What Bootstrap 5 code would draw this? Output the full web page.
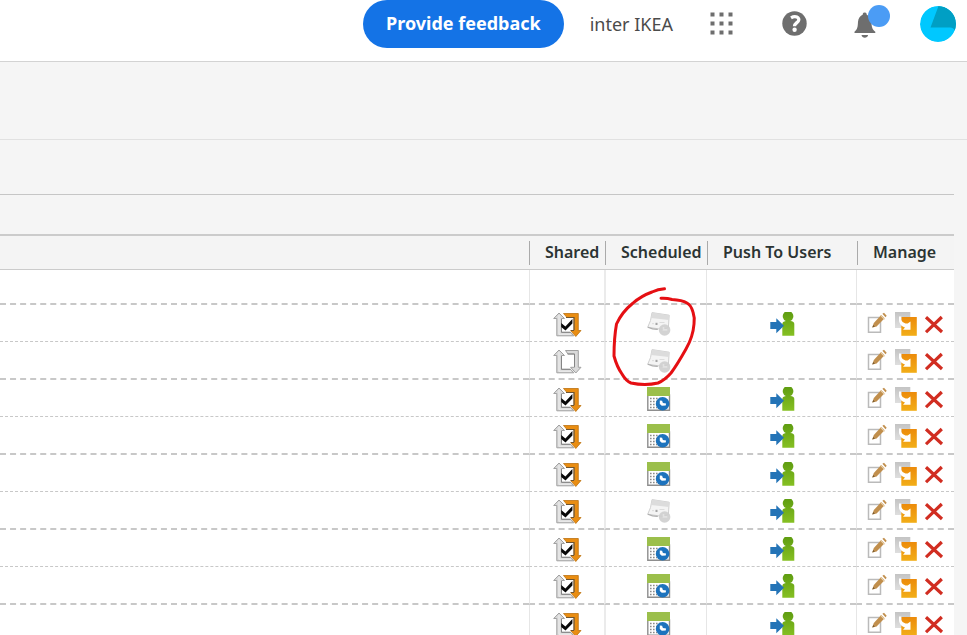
<!DOCTYPE html>
<html lang="en">
<head>
<meta charset="utf-8">
<meta name="viewport" content="width=device-width, initial-scale=1">
<title>Report manager</title>
<link href="https://cdn.jsdelivr.net/npm/bootstrap@5.3.0/dist/css/bootstrap.min.css" rel="stylesheet">
<style>
body{font-family:"Noto Sans","Open Sans",sans-serif;background:#f5f5f5;color:#2c3433}
.shell-bar{height:62px;border-bottom:1px solid #d3d3d3;padding:0 11px 14px 0}
.feedback{height:48px;padding:0 23px 2px;background:#1473e6;border:0;font-size:18px;line-height:24px}
.org-name{font-size:18px;line-height:24px;color:#4b4b4b;margin:0 37px 0 26px}
.tool{line-height:0}
.tool-apps{margin-right:48px}
.tool-help{margin-right:47px}
.tool-bell{margin-right:42px}
.dot{width:22px;height:22px;background:#4b9cf5;top:-5px;left:14px}
.title-band{height:78px;border-bottom:1px solid #e1e1e1}
.content{margin-right:13px}
.filter-band{height:55px;border-bottom:1px solid #c6c6c6}
.space-band{height:39px}
.reports{table-layout:fixed;border-collapse:separate;border-spacing:0;background:#fff}
.c-shared{width:75px}.c-sched{width:102px}.c-push{width:150px}.c-manage{width:98px}
.reports th{height:36px;padding:0 0 0 1px;border-top:2px solid #cbcbcb;border-bottom:1px solid #cbcbcb;background:#f4f4f4;font-size:16px;font-weight:600;white-space:nowrap;vertical-align:middle}
.reports th:nth-child(2){padding-left:0}
.reports th span{display:block;height:24px;line-height:22px;border-left:1px solid #aaa;padding-left:15px}
.reports td{height:37px;padding:7px 0 0;vertical-align:top;line-height:0;border-bottom:1px dashed #c8c8c8}
.reports tr:nth-child(odd) td{height:38px;border-bottom:2px dashed #c8c8c8}
.reports tr.blank-row td{height:35px}
.reports td:nth-child(n+2){border-left:1px solid #e6e6e6}
.reports td:nth-child(3){border-left:2px solid #ebebeb}
.reports td:nth-child(2){padding-left:23px}
.reports td:nth-child(3){padding-left:41px}
.reports td:nth-child(4){padding-left:63px}
.reports td:nth-child(5){padding-left:10px}
.acts{gap:8px}
.ico{width:24px;height:26px}
.ico-share{width:30px}.ico-push{width:26px}.ico-edit{width:20px}.ico-copy{width:22px}.ico-del{width:20px}
.marker{top:286px;left:610px;pointer-events:none}
</style>
<script src="https://cdn.jsdelivr.net/npm/bootstrap@5.3.0/dist/js/bootstrap.bundle.min.js"></script>
</head>
<body>
<svg width="0" height="0" class="position-absolute" aria-hidden="true">
<defs>
<linearGradient id="gOr" x2="0" y2="1"><stop stop-color="#ec8b0b"/><stop offset="1" stop-color="#f2ae18"/></linearGradient>
<linearGradient id="gGn" x2="0" y2="1"><stop stop-color="#5d9b10"/><stop offset="1" stop-color="#86c023"/></linearGradient>
<linearGradient id="gGy" x2="0" y2="1"><stop stop-color="#c4c4c4"/><stop offset="1" stop-color="#dedede"/></linearGradient>
</defs>
<symbol id="share-left" viewBox="0 0 30 26">
<path d="M6 1 .7 6.5h3.1v17.3h17l-3-3.3H8.5v-14h3z" fill="#d9d9d9" stroke="#a0a0a0"/>
<path d="M6 3v19.2h12" fill="none" stroke="#efefef"/>
<path d="M8.5 7v13.2h9" fill="none" stroke="#858585"/>
</symbol>
<symbol id="share-on" viewBox="0 0 30 26">
<use href="#share-left" width="30" height="26"/>
<path d="M10.5 1.5h14.8v17H28L22.8 24.5 17.6 18.5h3.6V5.5H14z" fill="#e98d12" stroke="#bc7210" stroke-width=".8"/>
<path d="M13 5.5h8v12.5M18 18.5h3" fill="none" stroke="#6d5431" stroke-width="1.2"/>
<path d="m8.2 11 4.2 3.6 7-7.6v4.4L12.5 18.6 8.2 15z" fill="#080808"/>
</symbol>
<symbol id="share-off" viewBox="0 0 30 26">
<use href="#share-left" width="30" height="26"/>
<path d="M12.5 1.5h12.8v16.8H28L22.8 24l-5.2-5.7h3.9V5H15z" fill="#dadada" stroke="#a0a0a0"/>
<path d="M14.5 5h7v13" fill="none" stroke="#858585"/>
</symbol>
<symbol id="sched-on" viewBox="0 0 24 26">
<path d="M.8 8h21.7v15.3H.8z" fill="#fff" stroke="#8e8e8e" stroke-width="1.4"/>
<path d="M0 0h23v9H0z" fill="#9bbf4b"/>
<path d="M3 11.5h13M3 14.5h9M3 17.5h7M3 20.5h7" stroke="#8b8b8b" stroke-width="1.3" stroke-dasharray="1.6 1.4"/>
<circle cx="15.6" cy="16.8" r="6.8" fill="#1d73bd"/>
<path d="M12.8 13.5l2.3.3.8 2.2 3.2.6-.4 2-3.9.2-2-1.9z" fill="#fff"/>
</symbol>
<symbol id="sched-off" viewBox="0 0 24 26">
<path d="m5 .6 17.2 2.6-.8 12.3-5.4 2L.7 15.2q3.5-6 4.3-14.6" fill="#f4f4f4" stroke="#cfcfcf"/>
<path d="m5 .6 17.2 2.6-.3 4.8L4 6z" fill="#dcdcdc"/>
<path d="M.8 15.2q5.2 2.4 10 2.2" stroke="#b0b0b0" stroke-width="1.2" fill="none"/>
<path d="M8.5 10.8h2v2.2h-2z" fill="#a5a5a5"/>
<path d="M12.5 10.5h5M5 11.7h2" stroke="#dcdcdc"/>
<circle cx="17.6" cy="18" r="5.8" fill="#cecece" fill-opacity=".9"/>
<path d="M16.5 15v2.9h3.8" fill="none" stroke="#e2e2e2" stroke-width="1.6"/>
</symbol>
<symbol id="push" viewBox="0 0 26 26">
<path d="M12.3 23.8V12q0-2.5 3.5-3a5.3 5.3 0 1 1 4.5 0Q24.3 9.3 24.3 12v11.8z" fill="url(#gGn)"/>
<path d="M.3 10h6V6.2l7.7 7.6-7.7 7.5V17h-6z" fill="#2474b7"/>
</symbol>
<symbol id="edit" viewBox="0 0 20 26">
<path d="M1.5 5.5h12v14.7h-12z" fill="#fff" stroke="#bababa" stroke-width="1.5"/>
<path d="m5.3 15.6 1.5-4.5 7.4-8 3.4 3.2-8 8.1z" fill="#c18f4d"/><path d="m5.3 15.6.9-2.7 1.7 1.5z" fill="#785a30"/>
<path d="m13.6 3.4 4 4" stroke="#ead3af" stroke-width="1.1"/>
<path d="m15.4 1.8 1.6-1 2.7 3-1.2 1.4z" fill="#c18f4d"/>
</symbol>
<symbol id="copy" viewBox="0 0 22 26">
<path d="M0 0h15.3v16H0z" fill="url(#gGy)"/>
<path d="M6.3 5h15.5v18.8H6.3z" fill="url(#gOr)"/>
<path d="M4 4.5h2.3V8q1 3 4.2 3.6h2.2l2.8-2.1v8.3H8l2-2.3Q5 14 4 9z" fill="#fff"/>
</symbol>
<symbol id="del" viewBox="0 0 20 26">
<path d="M1 5.2 17 20M16.8 5 1 20.2" fill="none" stroke="#d12d21" stroke-width="3.2"/>
</symbol>
</svg>

<div class="position-relative vh-100 overflow-hidden">
<header class="shell-bar bg-white d-flex align-items-center justify-content-end">
<button type="button" class="feedback btn btn-primary rounded-pill fw-bold">Provide feedback</button>
<span class="org-name">inter IKEA</span>
<button type="button" class="tool tool-apps btn p-0 border-0 rounded-0" aria-label="Apps"><svg width="24" height="24" fill="#6e6e6e"><path d="M.5.5h4v4h-4zM9.5.5h4v4h-4zM18.5.5h4v4h-4zM.5 9.5h4v4h-4zM9.5 9.5h4v4h-4zM18.5 9.5h4v4h-4zM.5 18.5h4v4h-4zM9.5 18.5h4v4h-4zM18.5 18.5h4v4h-4z"/></svg></button>
<button type="button" class="tool tool-help btn p-0 border-0 rounded-0" aria-label="Help"><svg width="25" height="25"><circle cx="12.5" cy="12.5" r="12.2" fill="#6e6e6e"/><path d="M9 6.8q3.4-2 6-.7c2.8 1.5 2 4-.1 5.5-1.6 1.3-2.4 1.8-2.4 3.7" fill="none" stroke="#fff" stroke-width="3.3"/><circle cx="12.6" cy="18.8" r="2.2" fill="#fff"/></svg></button>
<button type="button" class="tool tool-bell btn p-0 border-0 rounded-0 position-relative" aria-label="Notifications"><svg width="24" height="28" viewBox="0 0 24 28" fill="#6e6e6e"><path d="M.5 23v-1.2c3.2-3 3.2-4.8 3.5-10C4.3 8 6.3 5.5 8.7 4.7V4a2.1 2.1 0 0 1 4 0v.7c2.6.8 4.4 3.2 4.7 7.1.3 5.2.5 7 3.9 10V23zM7.5 25h6.6c-.5 3.6-6.1 3.6-6.6 0"/></svg><span class="dot position-absolute rounded-circle"></span></button>
<button type="button" class="tool btn p-0 border-0 rounded-circle overflow-hidden" aria-label="Account"><svg width="36" height="36"><circle cx="18" cy="18" r="18" fill="#00c8ff"/><path d="M18.5 0a18 18 0 0 1 16.5 25q-1-3.5-5-3.5H10.5z" fill="#009fc4"/></svg></button>
</header>
<div class="title-band"></div>
<main class="content">
<div class="filter-band"></div>
<div class="space-band"></div>
<table class="reports w-100">
<colgroup><col><col class="c-shared"><col class="c-sched"><col class="c-push"><col class="c-manage"></colgroup>
<thead><tr><th></th><th scope="col"><span>Shared</span></th><th scope="col"><span>Scheduled</span></th><th scope="col"><span>Push To Users</span></th><th scope="col"><span>Manage</span></th></tr></thead>
<tbody id="rows"></tbody>
</table>
</main>
<svg class="marker position-absolute" width="90" height="104" viewBox="0 0 90 104" fill="none" stroke="#e50f13" stroke-width="3" stroke-linecap="round" stroke-linejoin="round"><path d="M54.5 2.7Q48 3 42 6 31 10 22.5 17.5 12 26 6.5 38 4 52 4 70q3 11 8 18 4 7 9 9 14 3 27 0 7-3 13-10 6-8 15-24 7-12 8-25 1-6-1-12-2-7-6-9-5-3-15-3.5-5-1.5-11-1.2"/></svg>
</div>
<script>
const icon = (id, cls, label) => `<svg class="ico ${cls}" role="img" aria-label="${label}"><use href="#${id}"/></svg>`;
const act = (id, label) => `<button type="button" class="btn p-0 border-0 rounded-0 lh-1 d-flex" aria-label="${label}">${icon(id, 'ico-' + id, label)}</button>`;
const reports = [
  {shared: 1, scheduled: 0, push: 1}, {shared: 0, scheduled: 0, push: 0},
  {shared: 1, scheduled: 1, push: 1}, {shared: 1, scheduled: 1, push: 1},
  {shared: 1, scheduled: 1, push: 1}, {shared: 1, scheduled: 0, push: 1},
  {shared: 1, scheduled: 1, push: 1}, {shared: 1, scheduled: 1, push: 1},
  {shared: 1, scheduled: 1, push: 1}
];
document.getElementById('rows').innerHTML = '<tr class="blank-row"><td></td><td></td><td></td><td></td><td></td></tr>' +
  reports.map(r => `<tr><td></td>
<td>${icon(r.shared ? 'share-on' : 'share-off', 'ico-share', r.shared ? 'Shared' : 'Not shared')}</td>
<td>${icon(r.scheduled ? 'sched-on' : 'sched-off', '', r.scheduled ? 'Scheduled' : 'Not scheduled')}</td>
<td>${r.push ? icon('push', 'ico-push', 'Push to users') : ''}</td>
<td><div class="acts d-flex">${act('edit', 'Edit')}${act('copy', 'Copy')}${act('del', 'Delete')}</div></td></tr>`).join('');
</script>
</body>
</html>
